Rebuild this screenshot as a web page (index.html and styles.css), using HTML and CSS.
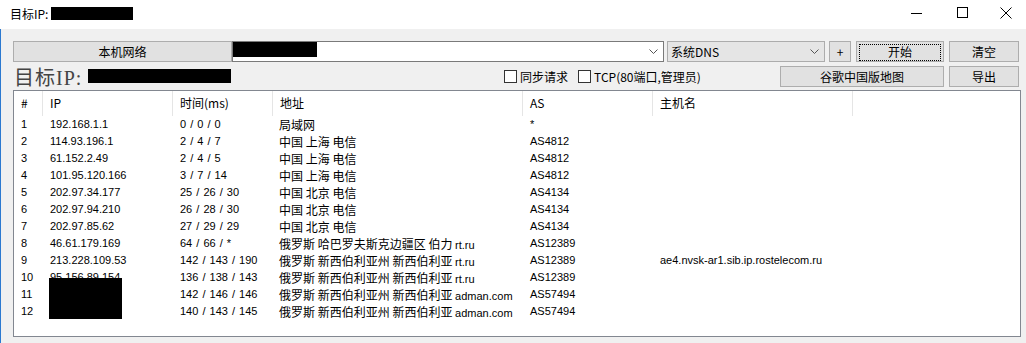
FILE: index.html
```html
<!DOCTYPE html>
<html lang="zh-CN">
<head>
    <meta charset="UTF-8">
    <title>目标IP</title>
    <link rel="stylesheet" href="styles.css">
</head>
<body>
    <!-- Title bar -->
    <div class="titlebar">
        <span class="title">目标IP:</span>
        <span class="redact title-redact"></span>
        <div class="controls">
            <span class="ctl"><svg width="12" height="12" viewBox="0 0 12 12"><line x1="0" y1="6.5" x2="11" y2="6.5" stroke="#000" stroke-width="1"/></svg></span>
            <span class="ctl"><svg width="12" height="12" viewBox="0 0 12 12"><rect x="0.5" y="0.5" width="10" height="10" fill="none" stroke="#000" stroke-width="1"/></svg></span>
            <span class="ctl"><svg width="12" height="12" viewBox="0 0 12 12"><path d="M0.5 0.5 L11.5 11.5 M11.5 0.5 L0.5 11.5" stroke="#000" stroke-width="1"/></svg></span>
        </div>
    </div>

    <div class="client">
        <!-- Toolbar row 1 -->
        <div class="row">
            <button class="btn w-local">本机网络</button>
            <div class="combo">
                <span class="redact combo-redact"></span>
                <svg class="arrow" width="9" height="5" viewBox="0 0 9 5"><polyline points="0.5,0.5 4.5,4.5 8.5,0.5" fill="none" stroke="#555"/></svg>
            </div>
            <div class="select">
                <span>系统DNS</span>
                <svg class="arrow" width="9" height="5" viewBox="0 0 9 5"><polyline points="0.5,0.5 4.5,4.5 8.5,0.5" fill="none" stroke="#555"/></svg>
            </div>
            <button class="btn w-plus">+</button>
            <button class="btn w-start focus"><span>开始</span></button>
            <button class="btn w-clear">清空</button>
        </div>

        <!-- Toolbar row 2 -->
        <div class="row row2">
            <span class="target">目标IP:</span>
            <span class="redact target-redact"></span>
            <label class="check c1"><span class="box"></span>同步请求</label>
            <label class="check c2"><span class="box"></span>TCP(80端口,管理员)</label>
            <button class="btn w-map">谷歌中国版地图</button>
            <button class="btn w-clear">导出</button>
        </div>

        <!-- Trace list -->
        <div class="list">
            <div class="grid head">
                <div>#</div><div>IP</div><div>时间(ms)</div><div>地址</div><div>AS</div><div>主机名</div><div class="fill"></div>
            </div>
            <div class="grid"><div>1</div><div>192.168.1.1</div><div>0 / 0 / 0</div><div class="cjk">局域网</div><div>*</div><div></div><div></div></div>
            <div class="grid"><div>2</div><div>114.93.196.1</div><div>2 / 4 / 7</div><div class="cjk">中国 上海 电信</div><div>AS4812</div><div></div><div></div></div>
            <div class="grid"><div>3</div><div>61.152.2.49</div><div>2 / 4 / 5</div><div class="cjk">中国 上海 电信</div><div>AS4812</div><div></div><div></div></div>
            <div class="grid"><div>4</div><div>101.95.120.166</div><div>3 / 7 / 14</div><div class="cjk">中国 上海 电信</div><div>AS4812</div><div></div><div></div></div>
            <div class="grid"><div>5</div><div>202.97.34.177</div><div>25 / 26 / 30</div><div class="cjk">中国 北京 电信</div><div>AS4134</div><div></div><div></div></div>
            <div class="grid"><div>6</div><div>202.97.94.210</div><div>26 / 28 / 30</div><div class="cjk">中国 北京 电信</div><div>AS4134</div><div></div><div></div></div>
            <div class="grid"><div>7</div><div>202.97.85.62</div><div>27 / 29 / 29</div><div class="cjk">中国 北京 电信</div><div>AS4134</div><div></div><div></div></div>
            <div class="grid"><div>8</div><div>46.61.179.169</div><div>64 / 66 / *</div><div class="cjk">俄罗斯 哈巴罗夫斯克边疆区 伯力 <span class="lat">rt.ru</span></div><div>AS12389</div><div></div><div></div></div>
            <div class="grid"><div>9</div><div>213.228.109.53</div><div>142 / 143 / 190</div><div class="cjk">俄罗斯 新西伯利亚州 新西伯利亚 <span class="lat">rt.ru</span></div><div>AS12389</div><div>ae4.nvsk-ar1.sib.ip.rostelecom.ru</div><div></div></div>
            <div class="grid"><div>10</div><div>95.156.89.154</div><div>136 / 138 / 143</div><div class="cjk">俄罗斯 新西伯利亚州 新西伯利亚 <span class="lat">rt.ru</span></div><div>AS12389</div><div></div><div></div></div>
            <div class="grid"><div>11</div><div></div><div>142 / 146 / 146</div><div class="cjk">俄罗斯 新西伯利亚州 新西伯利亚 <span class="lat">adman.com</span></div><div>AS57494</div><div></div><div></div></div>
            <div class="grid"><div>12</div><div></div><div>140 / 143 / 145</div><div class="cjk">俄罗斯 新西伯利亚州 新西伯利亚 <span class="lat">adman.com</span></div><div>AS57494</div><div></div><div></div></div>
            <!-- redaction over rows 10-12 -->
            <span class="redact list-redact"></span>
        </div>
    </div>
</body>
</html>
```

FILE: styles.css
```css
body {
    margin: 0;
    padding: 0;
    width: 1026px;
    height: 343px;
    overflow: hidden;
    font-family: "Liberation Sans", "Noto Sans CJK SC", sans-serif;
    font-size: 12px;
    color: #000;
    background-color: #f0f0f0;
}

.redact {
    display: inline-block;
    background-color: #000;
    flex-shrink: 0;
}

/* Title bar */
.titlebar {
    height: 29px;
    background-color: #fff;
    display: flex;
    align-items: center;
    padding-left: 10px;
    box-sizing: border-box;
}

.title {
    font-family: "Noto Sans CJK SC", sans-serif;
    font-size: 12px;
    margin-right: 3px;
    margin-top: -2px;
}

.title-redact {
    width: 82px;
    height: 13px;
    margin-top: -3px;
}

.controls {
    margin-left: auto;
    display: flex;
    height: 29px;
}

.ctl {
    width: 46px;
    display: flex;
    align-items: center;
    justify-content: center;
    margin-top: -3px;
}

.ctl:last-child {
    width: 40px;
}

/* Client area */
.client {
    border-left: 1px solid #2b79d0;
    height: 314px;
    padding: 12px 7px 0 12px;
    box-sizing: border-box;
}

.row {
    display: flex;
    align-items: center;
    height: 21px;
}

.row > * {
    flex-shrink: 0;
    white-space: nowrap;
}

.row2 {
    margin-top: 3px;
    height: 22px;
}

.btn {
    height: 21px;
    padding: 0;
    background-color: #e1e1e1;
    border: 1px solid #adadad;
    font-family: "Noto Sans CJK SC", sans-serif;
    font-size: 12px;
    color: #000;
    box-sizing: border-box;
    line-height: 17px;
}

.w-local { width: 219px; }
.w-plus { width: 22px; margin-left: 4px; }
.w-start { width: 88px; margin-left: 5px; }
.w-clear { width: 70px; margin-left: 5px; }
.w-map { width: 164px; margin-left: auto; }

.focus {
    padding: 2px;
}

.focus span {
    display: block;
    height: 15px;
    line-height: 14px;
    border: 1px dotted #000;
}

.combo {
    width: 432px;
    height: 21px;
    background-color: #fff;
    border: 1px solid #7a7a7a;
    box-sizing: border-box;
    display: flex;
    align-items: flex-start;
}

.combo-redact {
    width: 84px;
    height: 15px;
}

.arrow {
    margin-left: auto;
    margin-right: 5px;
    align-self: center;
}

.select {
    width: 158px;
    height: 21px;
    margin-left: 3px;
    background-color: #e5e5e5;
    border: 1px solid #acacac;
    box-sizing: border-box;
    display: flex;
    align-items: center;
    padding-left: 3px;
    font-family: "Noto Sans CJK SC", sans-serif;
}

.target {
    font-family: "Liberation Serif", "Noto Sans CJK SC", serif;
    font-size: 20px;
    color: #444;
    margin-left: 1px;
    width: 74px;
    letter-spacing: 1px;
}

.target-redact {
    width: 143px;
    height: 14px;
}

.check {
    display: flex;
    align-items: center;
    font-family: "Noto Sans CJK SC", sans-serif;
    font-size: 12px;
}

.check .box {
    width: 11px;
    height: 11px;
    border: 1px solid #333;
    background-color: #fff;
    margin-right: 3px;
}

.c1 { margin-left: 273px; }
.c2 { margin-left: 10px; }

/* List */
.list {
    position: relative;
    margin-top: 3px;
    width: 1008px;
    height: 247px;
    background-color: #fff;
    border: 1px solid #828790;
    box-sizing: border-box;
}

.grid {
    display: grid;
    grid-template-columns: 29px 130px 100px 250px 130px 200px 1fr;
    height: 17px;
    line-height: 17px;
    font-size: 11px;
}

.grid > div {
    padding-left: 7px;
    white-space: nowrap;
    overflow: hidden;
}

.grid > div:nth-child(3) {
    word-spacing: 1px;
}

.grid .cjk {
    font-family: "Noto Sans CJK SC", sans-serif;
    font-size: 12px;
    padding-left: 6px;
}

.cjk .lat {
    font-family: "Liberation Sans", sans-serif;
    font-size: 11px;
}

.head {
    height: 25px;
    line-height: 24px;
    font-family: "Noto Sans CJK SC", sans-serif;
    font-size: 12px;
}

.head > div {
    border-right: 1px solid #e5e5e5;
    box-sizing: border-box;
}

.head > div:nth-child(3) {
    word-spacing: 0;
}

.head > div.fill {
    border-right: none;
}

.list-redact {
    position: absolute;
    left: 35px;
    top: 187px;
    width: 73px;
    height: 41px;
}
```
